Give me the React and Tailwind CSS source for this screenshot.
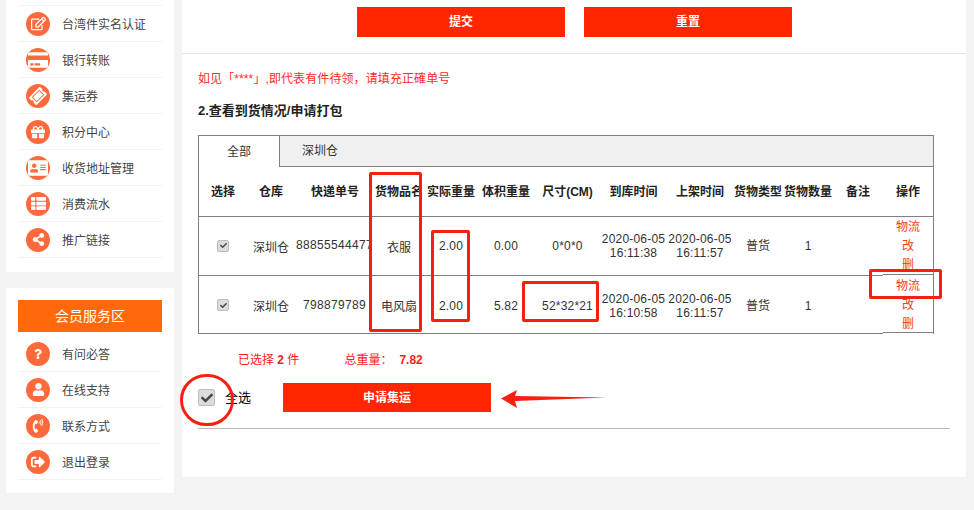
import { FaRegEdit, FaCreditCard, FaTicketAlt, FaGift, FaAddressCard, FaThList, FaShareAlt, FaQuestion, FaUser, FaPhoneVolume, FaSignOutAlt, FaCheck } from 'react-icons/fa'

const menuA = [
  ['台湾件实名认证', FaRegEdit, 15, ''],
  ['银行转账', FaCreditCard, 20, ''],
  ['集运券', FaTicketAlt, 16, '-rotate-45'],
  ['积分中心', FaGift, 14, ''],
  ['收货地址管理', FaAddressCard, 20, ''],
  ['消费流水', FaThList, 15, ''],
  ['推广链接', FaShareAlt, 13, ''],
]
const menuB = [
  ['有问必答', FaQuestion, 10, ''],
  ['在线支持', FaUser, 13, ''],
  ['联系方式', FaPhoneVolume, 14, ''],
  ['退出登录', FaSignOutAlt, 14, ''],
]

const cols = [
  ['选择', 'w-[48px]'],
  ['仓库', 'w-[48px]'],
  ['快递单号', 'w-[80px]'],
  ['货物品名', 'w-[50px] pr-[2px]'],
  ['实际重量', 'w-[52px]'],
  ['体积重量', 'w-[58px]'],
  ['尺寸(CM)', 'w-[65px]'],
  ['到库时间', 'w-[67px]'],
  ['上架时间', 'w-[66px]'],
  ['货物类型', 'w-[50px]'],
  ['货物数量', 'w-[50px]'],
  ['备注', 'w-[50px]'],
  ['操作', 'w-[50px]'],
]

const rows = [
  { no: '88855544477', name: '衣服', real: '2.00', vol: '0.00', size: '0*0*0', inTime: '16:11:38', noClass: 'text-left pl-px mr-[2px] w-[78px]', sizeClass: 'text-center' },
  { no: '798879789', name: '电风扇', real: '2.00', vol: '5.82', size: '52*32*21', inTime: '16:10:58', noClass: 'text-right pr-[9px] w-[80px]', sizeClass: 'text-right pr-[7px]' },
]

function MenuRow({ label, Icon, size, turn }) {
  return (
    <div className="flex h-[36px] items-center border-b border-[#f3f3f3] pl-2">
      <span className="flex h-6 w-6 items-center justify-center rounded-full bg-[#ff6a3c] text-white">
        <Icon size={size} className={turn} />
      </span>
      <span className="ml-3 pt-[2px] text-[12px] text-[#444]">{label}</span>
    </div>
  )
}

function Check({ box, icon }) {
  return (
    <span className={`inline-flex items-center justify-center rounded-[2px] border border-[#bdbdbd] bg-[#dcdcdc] text-[#444] ${box}`}>
      <FaCheck size={icon} />
    </span>
  )
}

function Frame({ className }) {
  return <div className={`absolute rounded-[2px] border-[3px] border-[#f5200f] ${className}`} />
}

export default function App() {
  return (
    <div className="flex h-[510px] w-[974px] overflow-hidden bg-[#f3f3f3] font-['Liberation_Sans','Noto_Sans_CJK_SC',sans-serif]">
      <div className="ml-[6px] mr-[8px] w-[168px] shrink-0">
        <div className="h-[272px] bg-white px-3">
          <div className="h-[6px] border-b border-[#f3f3f3]" />
          {menuA.map(([label, Icon, size, turn]) => <MenuRow key={label} label={label} Icon={Icon} size={size} turn={turn} />)}
        </div>
        <div className="mt-4 h-[205px] bg-white px-3 pt-3">
          <div className="flex h-8 items-center justify-center bg-[#ff690b] text-[14px] text-white">会员服务区</div>
          <div className="mt-1">
            {menuB.map(([label, Icon, size, turn]) => <MenuRow key={label} label={label} Icon={Icon} size={size} turn={turn} />)}
          </div>
        </div>
      </div>

      <div className="relative h-[477px] w-[784px] shrink-0 bg-white">
        <div className="flex h-[54px] gap-[19px] border-b border-[#e6e6e6] pl-[175px] pt-[7px]">
          <button className="h-[30px] w-[208px] bg-[#ff2600] text-[12px] font-bold text-white">提交</button>
          <button className="h-[30px] w-[208px] bg-[#ff2600] text-[12px] font-bold text-white">重置</button>
        </div>

        <div className="pl-4">
          <p className="mt-[17px] text-[12px] leading-[16px] tracking-[0.1px] text-[#ff2b2b]">如见「****」,即代表有件待领，请填充正確单号</p>
          <h3 className="mt-4 text-[13px] font-bold leading-[16px] text-[#222]">2.查看到货情况/申请打包</h3>

          <div className="mt-4 h-[199px] w-[736px] border border-[#808080]">
            <div className="flex h-[31px] border-b border-[#808080] bg-[#f0f0f0] text-[12px] text-[#333]">
              <div className="-mb-px flex w-[81px] items-center justify-center border-r border-[#808080] bg-white">全部</div>
              <div className="flex w-[80px] items-center justify-center">深圳仓</div>
            </div>

            <div className="flex h-[50px] items-center border-b border-[#808080] pt-px text-[12px] font-bold text-[#222]">
              {cols.map(([label, w]) => (
                <div key={label} className={`${w} shrink-0 whitespace-nowrap text-center`}>{label}</div>
              ))}
            </div>

            {rows.map((r, i) => (
              <div key={r.no} className={`flex h-[59px] items-center text-center text-[12px] leading-[14px] text-[#333] ${i === 0 ? 'border-b border-[#808080]' : ''}`}>
                <div className="w-[48px] shrink-0 pb-[2px]"><Check box="h-[12px] w-[12px]" icon={7} /></div>
                <div className="w-[48px] shrink-0 pt-[3px]">深圳仓</div>
                <div className={`shrink-0 overflow-hidden whitespace-nowrap pb-[2px] tracking-[0.33px] ${r.noClass}`}>{r.no}</div>
                <div className="w-[50px] shrink-0 pr-[2px] pt-[3px]">{r.name}</div>
                <div className="w-[52px] shrink-0 tracking-[0.2px]">{r.real}</div>
                <div className="w-[58px] shrink-0 tracking-[0.2px]">{r.vol}</div>
                <div className={`w-[65px] shrink-0 tracking-[0.2px] ${r.sizeClass}`}>{r.size}</div>
                <div className="w-[67px] shrink-0 tracking-[0.2px]">2020-06-05<br />{r.inTime}</div>
                <div className="w-[66px] shrink-0 tracking-[0.2px]">2020-06-05<br />16:11:57</div>
                <div className="w-[50px] shrink-0">普货</div>
                <div className="w-[50px] shrink-0">1</div>
                <div className="w-[50px] shrink-0" />
                <div className={`w-[50px] shrink-0 self-start leading-[19px] text-[#f0401e] ${i === 1 ? '-mt-[2px] h-[59px] border-y border-[#808080] bg-white pt-[2px] shadow-[0_1px_0_#fff]' : 'pt-px'}`}>
                  <div>物流</div>
                  <div>改</div>
                  <div>删</div>
                </div>
              </div>
            ))}
          </div>

          <div className="mt-[18px] flex h-[16px] items-center text-[12px] text-[#ff1a1a]">
            <span className="ml-10">已选择 <b>2</b> 件</span>
            <span className="ml-[45px]">总重量：<b className="ml-[7px]">7.82</b></span>
          </div>

          <div className="mt-[15px] flex h-[29px] items-center">
            <Check box="h-[17px] w-[17px]" icon={12} />
            <span className="ml-[10px] text-[13px] text-black">全选</span>
            <button className="ml-[32px] h-[29px] w-[208px] bg-[#ff2600] text-[12px] font-bold text-white">申请集运</button>
          </div>

          <div className="mt-[16px] w-[752px] border-b border-[#bbb]" />
        </div>

        <Frame className="left-[187px] top-[172px] h-[160px] w-[53px]" />
        <Frame className="left-[249px] top-[230px] h-[92px] w-[39px]" />
        <Frame className="left-[340px] top-[281px] h-[41px] w-[77px]" />
        <Frame className="left-[687px] top-[269px] h-[30px] w-[73px]" />
        <div className="absolute left-[-2px] top-[374px] h-[52px] w-[54px] rounded-full border-[3px] border-[#f5200f]" />
        <svg className="absolute left-[319px] top-[390px]" width="105" height="18" viewBox="0 0 105 18">
          <path d="M0 8.5 L16 0 L14 6 L105 7.5 L14 11 L16 18 Z" fill="#f5200f" />
        </svg>
      </div>
    </div>
  )
}
